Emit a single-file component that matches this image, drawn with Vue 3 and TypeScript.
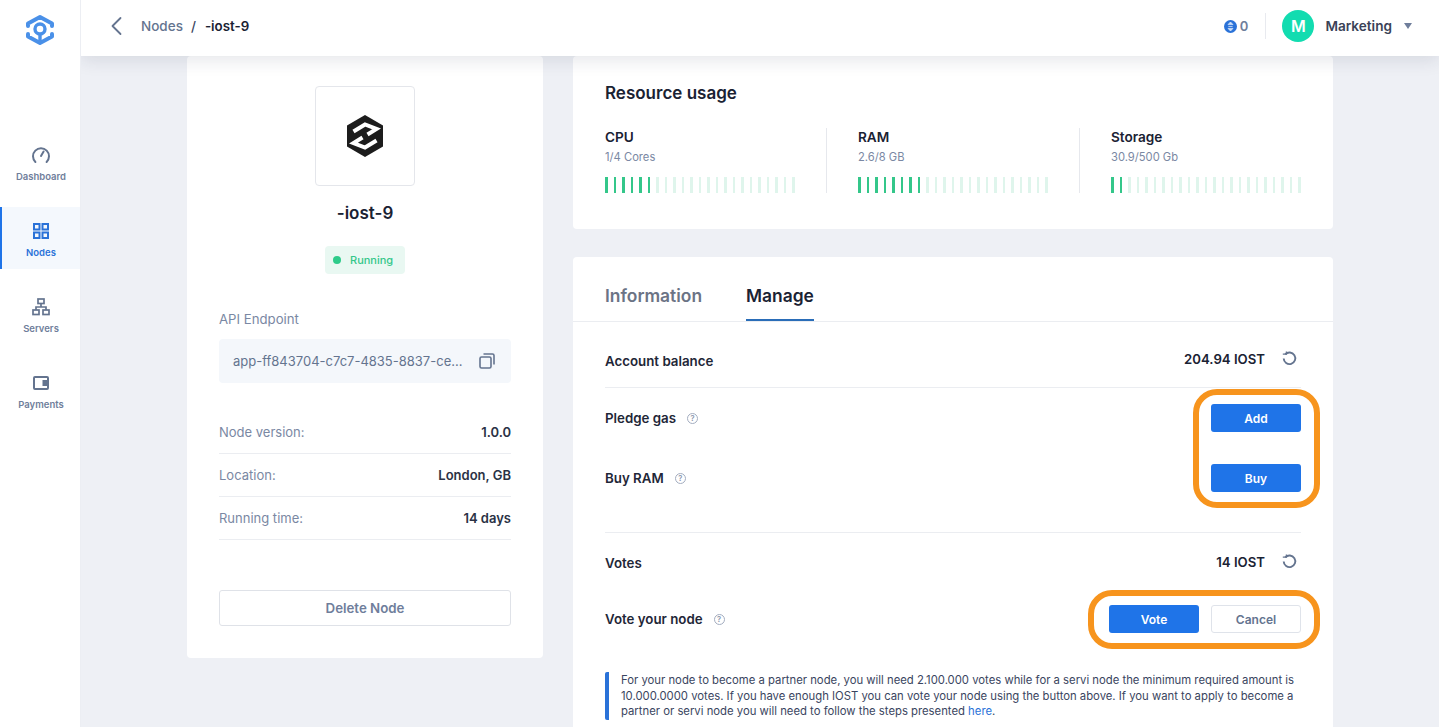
<script setup lang="ts">
interface Resource { name: string; detail: string; used: number }
const resources: Resource[] = [
  { name: 'CPU', detail: '1/4 Cores', used: 6 },
  { name: 'RAM', detail: '2.6/8 GB', used: 8 },
  { name: 'Storage', detail: '30.9/500 Gb', used: 2 },
]
const bars = Array.from({ length: 23 }, (_, i) => i)
const facts = [
  { label: 'Node version:', value: '1.0.0' },
  { label: 'Location:', value: 'London, GB' },
  { label: 'Running time:', value: '14 days' },
]
</script>

<template>
  <div class="app">
    <aside class="sidebar">
      <svg class="logo" width="36" height="36" viewBox="0 0 36 36" fill="none" stroke="#4a90e8" stroke-width="4" stroke-linejoin="round" stroke-linecap="round">
        <path d="M6 14 V11.5 L18 5 L30 11.5 V14" />
        <path d="M6 22 V24.5 L18 31 L30 24.5 V22" />
        <circle cx="18" cy="17" r="5" stroke-width="3.4" />
        <path d="M18 23 V30" stroke-width="3.4" />
      </svg>
      <nav class="nav">
        <a class="nav-item">
          <svg width="20" height="20" viewBox="0 0 20 20" fill="none" stroke="#64748f" stroke-width="2" stroke-linecap="round"><path d="M4.4 17 A8 8 0 1 1 15.6 17" /><path d="M10 11 L12.6 6.6" /></svg>
          <span>Dashboard</span>
        </a>
        <a class="nav-item active">
          <svg width="20" height="20" viewBox="0 0 20 20" fill="none" stroke="#2a72d8" stroke-width="2"><rect x="3" y="3" width="5.5" height="5.5" /><rect x="11.5" y="3" width="5.5" height="5.5" /><rect x="3" y="11.5" width="5.5" height="5.5" /><rect x="11.5" y="11.5" width="5.5" height="5.5" /></svg>
          <span>Nodes</span>
        </a>
        <a class="nav-item">
          <svg width="20" height="20" viewBox="0 0 20 20" fill="none" stroke="#64748f" stroke-width="1.7"><rect x="7" y="2" width="6" height="4.5" /><path d="M10 6.5 V10 M5 13 V10 H15 V13" /><rect x="2" y="13" width="6" height="4.5" /><rect x="12" y="13" width="6" height="4.5" /></svg>
          <span>Servers</span>
        </a>
        <a class="nav-item">
          <svg width="20" height="20" viewBox="0 0 20 20" fill="none" stroke="#64748f" stroke-width="2"><rect x="3" y="4" width="14" height="12" rx="1" /><path d="M17 8 H12.5 V12 H17" fill="#64748f" /></svg>
          <span>Payments</span>
        </a>
      </nav>
    </aside>

    <div class="main">
      <header class="topbar">
        <svg class="back" width="12" height="20" viewBox="0 0 12 20" fill="none" stroke="#64748f" stroke-width="1.8" stroke-linecap="round" stroke-linejoin="round"><path d="M10.5 2 L2.5 10 L10.5 18" /></svg>
        <div class="crumbs"><span class="crumb">Nodes</span><span class="sep">/</span><span class="current">-iost-9</span></div>
        <div class="top-right">
          <div class="credit">
            <svg width="13" height="13" viewBox="0 0 13 13"><circle cx="6.5" cy="6.5" r="6.5" fill="#2a72d8" /><path d="M6.5 2 L9 4.6 H4 Z M6.5 11 L4 8.4 H9 Z M4.4 6.5 H8.6" fill="#cfe0f8" stroke="#cfe0f8" stroke-width=".8" /></svg>
            <span>0</span>
          </div>
          <span class="top-divider"></span>
          <span class="avatar">M</span>
          <span class="user">Marketing</span>
          <span class="caret"></span>
        </div>
      </header>

      <div class="content">
        <section class="card node-card">
          <div class="node-logo">
            <svg width="36" height="42" viewBox="0 0 36 42">
              <path d="M18 0 L36 10.5 V31.5 L18 42 L0 31.5 V10.5 Z" fill="#1c1c1c" />
              <path d="M6.5 16.5 L18 9.5 L29.5 14 L20.5 19.5" fill="none" stroke="#fff" stroke-width="4" stroke-linejoin="miter" />
              <path d="M29.5 25.5 L18 32.5 L6.5 28 L15.5 22.5" fill="none" stroke="#fff" stroke-width="4" stroke-linejoin="miter" />
            </svg>
          </div>
          <h1 class="node-name">-iost-9</h1>
          <div class="status"><i class="dot"></i>Running</div>
          <div class="api-label">API Endpoint</div>
          <div class="api-field">
            <span class="api-text">app-ff843704-c7c7-4835-8837-ce...</span>
            <svg width="16" height="16" viewBox="0 0 16 16" fill="none" stroke="#64748f" stroke-width="1.6"><rect x="1" y="4" width="11" height="11" rx="1.5" /><path d="M4.5 1 H13.5 A1.5 1.5 0 0 1 15 2.5 V11.5" /></svg>
          </div>
          <dl class="facts">
            <div v-for="fact in facts" :key="fact.label" class="fact">
              <dt>{{ fact.label }}</dt>
              <dd>{{ fact.value }}</dd>
            </div>
          </dl>
          <button class="delete">Delete Node</button>
        </section>

        <div class="right">
          <section class="card usage">
            <h2>Resource usage</h2>
            <div class="resources">
              <div v-for="r in resources" :key="r.name" class="resource">
                <div class="res-name">{{ r.name }}</div>
                <div class="res-detail">{{ r.detail }}</div>
                <div class="bars">
                  <i v-for="b in bars" :key="b" class="bar" :class="{ on: b < r.used }"></i>
                </div>
              </div>
            </div>
          </section>

          <section class="card manage">
            <div class="tabs">
              <span class="tab">Information</span>
              <span class="tab active">Manage</span>
            </div>
            <div class="panel">
              <div class="row balance">
                <span class="label">Account balance</span>
                <span class="amount">204.94 IOST
                  <svg class="refresh" width="15" height="15" viewBox="0 0 15 15" fill="none" stroke="#64748f" stroke-width="1.9"><path d="M3.2 3.4 A5.8 5.8 0 1 1 1.7 7.5" /><path d="M.8 3.2 H4.4 V.6" stroke-width="1.3" /></svg>
                </span>
              </div>
              <div class="actions-group">
                <div class="row action">
                  <span class="label">Pledge gas <i class="help">?</i></span>
                  <button class="btn primary">Add</button>
                </div>
                <div class="row action">
                  <span class="label">Buy RAM <i class="help">?</i></span>
                  <button class="btn primary">Buy</button>
                </div>
                <span class="mark mark-tall"></span>
              </div>
              <div class="row votes">
                <span class="label">Votes</span>
                <span class="amount">14 IOST
                  <svg class="refresh" width="15" height="15" viewBox="0 0 15 15" fill="none" stroke="#64748f" stroke-width="1.9"><path d="M3.2 3.4 A5.8 5.8 0 1 1 1.7 7.5" /><path d="M.8 3.2 H4.4 V.6" stroke-width="1.3" /></svg>
                </span>
              </div>
              <div class="row vote-row">
                <span class="label">Vote your node <i class="help">?</i></span>
                <div class="btn-pair">
                  <button class="btn primary">Vote</button>
                  <button class="btn ghost">Cancel</button>
                </div>
                <span class="mark mark-wide"></span>
              </div>
              <p class="note">For your node to become a partner node, you will need 2.100.000 votes while for a servi node the minimum required amount is 10.000.0000 votes. If you have enough IOST you can vote your node using the button above. If you want to apply to become a partner or servi node you will need to follow the steps presented <a>here</a>.</p>
            </div>
          </section>
        </div>
      </div>
    </div>
  </div>
</template>

<style>
html, body { margin: 0; overflow: hidden; }
</style>

<style scoped>
* { box-sizing: border-box; }
.app {
  display: flex;
  height: 727px;
  overflow: hidden;
  font-family: Inter, "Liberation Sans", sans-serif;
  color: #1a2233;
  background: #eef0f5;
}
.sidebar {
  position: relative;
  z-index: 3;
  flex: 0 0 81px;
  background: #fff;
  border-right: 1px solid #eceef3;
}
.logo { display: block; margin: 12px auto 0 22px; }
.nav { display: flex; flex-direction: column; gap: 14px; margin-top: 83px; }
.nav-item {
  display: flex;
  flex-direction: column;
  align-items: center;
  height: 62px;
  padding: 14px 0 0 2px;
  gap: 6px;
  font-size: 9.5px;
  font-weight: 600;
  line-height: 12px;
  color: #6f7e9b;
}
.nav-item.active {
  background: #f4f8fd;
  border-left: 2px solid #1f74e8;
  padding-left: 0;
  color: #2a72d8;
}
.main { flex: 1; min-width: 0; display: flex; flex-direction: column; }
.topbar {
  position: relative;
  z-index: 2;
  flex: 0 0 56px;
  display: flex;
  align-items: center;
  padding: 0 27px 4px 29px;
  background: #fff;
  box-shadow: 0 4px 18px rgba(30, 40, 70, .12);
}
.crumbs { display: flex; align-items: center; margin-left: 19px; font-size: 13.5px; font-weight: 500; }
.crumb { color: #64748f; }
.sep { margin: 0 9px 0 8px; color: #3a4560; }
.current { font-weight: 600; font-size: 13.3px; }
.top-right { margin-left: auto; display: flex; align-items: center; }
.credit { display: flex; align-items: center; gap: 3px; font-size: 13px; font-weight: 600; color: #6f7e9b; }
.top-divider { width: 1px; height: 26px; margin: 0 16px 0 17px; background: #e8eaef; }
.avatar {
  width: 32px; height: 32px; border-radius: 50%;
  display: flex; align-items: center; justify-content: center;
  background: #12dcb0; color: #fff; font-size: 16px; font-weight: 600;
}
.user { margin-left: 11px; font-size: 13.6px; font-weight: 600; color: #3a4257; }
.caret {
  margin-left: 12px; width: 0; height: 0;
  border-left: 4px solid transparent; border-right: 4px solid transparent;
  border-top: 6px solid #6f7e9b;
}
.content {
  flex: 1;
  min-height: 0;
  display: flex;
  align-items: flex-start;
  gap: 30px;
  padding-left: 106px;
}
.card { background: #fff; border-radius: 4px; }
.node-card {
  flex: 0 0 356px;
  height: 602px;
  display: flex;
  flex-direction: column;
  padding: 30px 32px 0;
}
.node-logo {
  align-self: center;
  width: 100px; height: 100px;
  display: flex; align-items: center; justify-content: center;
  border: 1px solid #e4e6eb;
  border-radius: 4px;
}
.node-name { margin: 16px 0 0; text-align: center; font-size: 17px; line-height: 22px; font-weight: 600; }
.status {
  align-self: center;
  display: flex; align-items: center; gap: 9px;
  width: 80px; height: 28px;
  margin-top: 22px;
  padding-left: 8px;
  background: #e9f8f2;
  border-radius: 4px;
  color: #34c78a;
  font-size: 11px;
  font-weight: 500;
}
.dot { width: 8px; height: 8px; border-radius: 50%; background: #2ecb8a; }
.api-label { margin-top: 37px; font-size: 13.2px; line-height: 16px; color: #7a88a3; }
.api-field {
  display: flex; align-items: center; justify-content: space-between;
  height: 44px; margin-top: 12px;
  padding: 0 16px 0 14px;
  background: #f4f7fb;
  border-radius: 4px;
  font-size: 13px;
  color: #64748f;
}
.facts { margin: 28px 0 0; }
.fact {
  display: flex; justify-content: space-between; align-items: center;
  height: 43px;
  border-bottom: 1px solid #ebedf1;
  font-size: 13px;
}
.fact dt { color: #7a88a3; }
.fact dd { margin: 0; font-weight: 600; color: #2a3245; }
.delete {
  height: 36px; margin-top: 50px;
  background: #fff;
  border: 1px solid #dfe2e8;
  border-radius: 3px;
  font: 600 13.3px Inter, sans-serif;
  color: #6f7e9b;
}
.right { flex: 0 0 760px; display: flex; flex-direction: column; gap: 28px; }
.usage { height: 173px; padding: 26px 32px 0; }
.usage h2 { margin: 0; font-size: 17px; line-height: 22px; font-weight: 600; }
.resources { display: flex; margin-top: 24px; }
.resource { width: 190px; margin-right: 32px; height: 65px; position: relative; }
.resource + .resource { margin-left: 31px; }
.resource + .resource::before {
  content: ""; position: absolute; left: -32px; top: 0; bottom: 0; width: 1px; background: #e6e8ed;
}
.resource:last-child { margin-right: 0; }
.res-name { font-size: 13.6px; line-height: 18px; font-weight: 600; }
.res-detail { margin-top: 4px; font-size: 11.2px; line-height: 14px; color: #7a88a3; }
.bars { display: flex; justify-content: space-between; margin-top: 13px; }
.bar { width: 2.6px; height: 16px; background: #dff5ec; }
.bar.on { background: #34c78a; }
.manage { height: 600px; }
.tabs { display: flex; gap: 44px; height: 65px; padding: 0 32px; border-bottom: 1px solid #ebedf1; }
.tab { height: 64px; padding-top: 27px; font-size: 17.4px; line-height: 24px; font-weight: 600; color: #6b7385; }
.tab.active { color: #1a2233; border-bottom: 2px solid #2a6db8; }
.panel { padding: 0 32px; }
.row { position: relative; display: flex; align-items: center; justify-content: space-between; }
.label { display: flex; align-items: center; font-size: 13.3px; font-weight: 600; color: #1f2738; }
.help {
  display: inline-flex; align-items: center; justify-content: center;
  width: 11px; height: 11px; margin-left: 11px;
  border: 1px solid #a3adc0; border-radius: 50%;
  font-size: 7.5px; font-style: normal; color: #8a96ad;
}
.amount { display: flex; align-items: center; gap: 17px; padding-right: 4px; font-size: 13.2px; font-weight: 600; }
.balance { height: 66px; border-bottom: 1px solid #ebedf1; }
.balance .label { margin-top: 12px; }
.balance .amount { margin-top: 8px; }
.actions-group { position: relative; height: 145px; border-bottom: 1px solid #ebedf1; }
.action { height: 60px; }
.votes { height: 58px; }
.votes .label { margin-top: 2px; }
.votes .amount { margin-top: -1px; }
.vote-row { height: 56px; }
.btn-pair { display: flex; gap: 12px; }
.btn {
  width: 90px; height: 28px;
  border-radius: 3px;
  border: 1px solid transparent;
  font: 600 12px Inter, sans-serif;
  padding: 0;
}
.btn.primary { background: #1f74e8; color: #fff; }
.btn.ghost { background: #fff; border-color: #dfe3ea; color: #64748f; }
.mark { position: absolute; border: 6px solid #f7941d; pointer-events: none; }
.mark-tall { right: -19px; top: 1px; width: 127px; height: 119px; border-radius: 24px; }
.mark-wide { right: -19px; top: -1px; width: 232px; height: 59px; border-radius: 24px; }
.note {
  margin: 25px 0 0;
  padding: 1px 0 0 12px;
  border-left: 4px solid #2a72d8;
  border-radius: 2px;
  font-size: 11.3px;
  line-height: 15.5px;
  color: #3a4560;
}
.note a { color: #2a72d8; }
</style>
